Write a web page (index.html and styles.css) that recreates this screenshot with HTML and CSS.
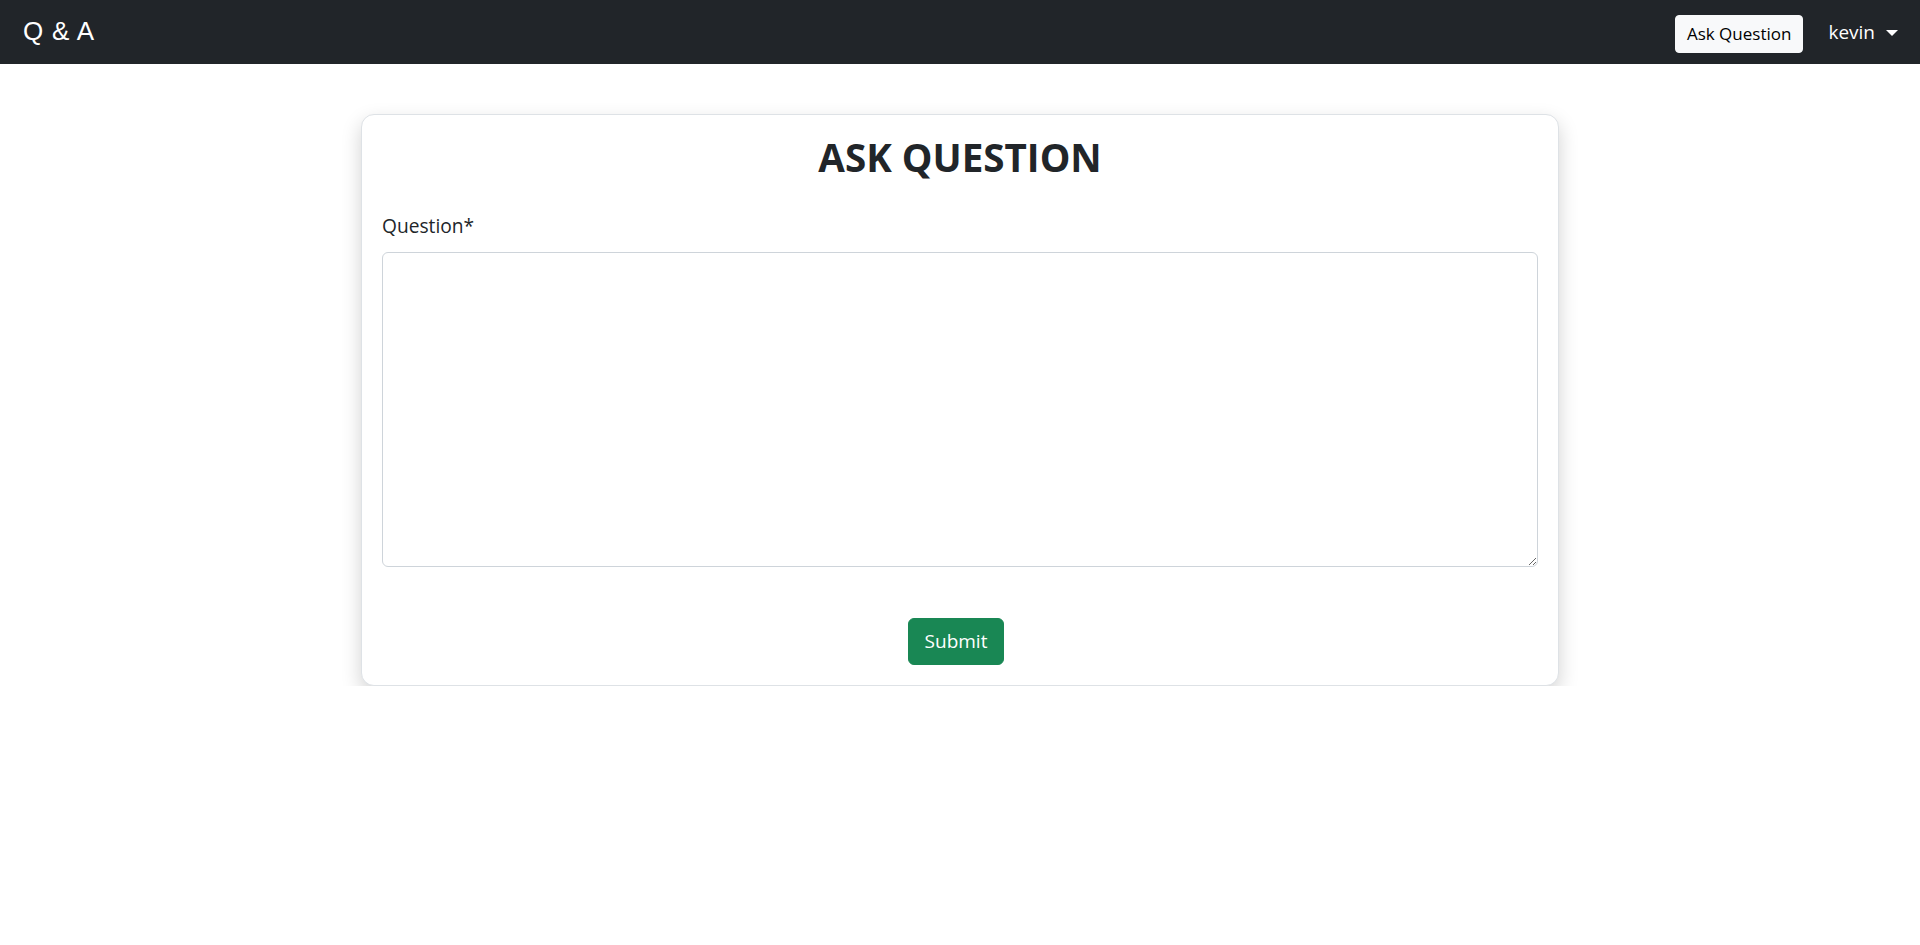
FILE: index.html
```html
<!DOCTYPE html>
<html lang="en">
<head>
<meta charset="utf-8">
<title>Q &amp; A - Ask Question</title>
<link rel="stylesheet" href="styles.css">
</head>
<body>
<nav class="navbar">
  <a class="brand" href="#">Q &amp; A</a>
  <div class="nav-right">
    <a class="btn-light" href="#">Ask Question</a>
    <a class="user" href="#">kevin<span class="caret"></span></a>
  </div>
</nav>
<main class="page">
  <form class="card">
    <h1 class="title">ASK QUESTION</h1>
    <label class="label" for="q">Question*</label>
    <textarea id="q" class="textarea"></textarea>
    <div class="actions">
      <button type="button" class="btn-submit">Submit</button>
    </div>
  </form>
</main>
</body>
</html>
```

FILE: styles.css
```css
* { box-sizing: border-box; }
html, body { margin: 0; padding: 0; }
body {
  font-family: "Open Sans", "Noto Sans", sans-serif;
  color: #212529;
  background: #fff;
}
a { text-decoration: none; }

.navbar {
  height: 64px;
  background: #212529;
  display: flex;
  align-items: center;
  justify-content: space-between;
  padding: 0 22px 0 23px;
}
.brand {
  font-family: "Liberation Sans", Arial, sans-serif;
  font-size: 26px;
  color: #fff;
  letter-spacing: 0.8px;
  line-height: 1;
  margin-top: -2px;
}
.nav-right {
  display: flex;
  align-items: center;
  gap: 25px;
  margin-top: 4px;
}
.btn-light {
  display: inline-block;
  background: #f8f9fa;
  color: #000;
  border: 1px solid #f8f9fa;
  border-radius: 4px;
  font-size: 17px;
  line-height: 24px;
  padding: 6px 11px;
}
.user {
  color: #fff;
  font-size: 19px;
  line-height: 24px;
  display: flex;
  align-items: center;
  margin-top: -4px;
}
.caret {
  display: inline-block;
  width: 0;
  height: 0;
  margin-left: 11px;
  margin-top: 2px;
  border-top: 6px solid #fff;
  border-left: 6px solid transparent;
  border-right: 6px solid transparent;
}

.page {
  padding-top: 50px;
}
.card {
  width: 1198px;
  margin: 0 auto;
  border: 1px solid #dee2e6;
  border-radius: 13px;
  background: #fff;
  box-shadow: 0 8px 20px rgba(0, 0, 0, 0.18);
  padding: 20px;
  display: flex;
  flex-direction: column;
}
.title {
  margin: 0 0 32px;
  text-align: center;
  font-size: 38.6px;
  font-weight: 700;
  line-height: 45px;
}
.label {
  font-size: 19.2px;
  line-height: 28.8px;
  margin-bottom: 11px;
}
.textarea {
  width: 100%;
  height: 315px;
  border: 1px solid #ced4da;
  border-radius: 6px;
  padding: 6px 12px;
  font-family: inherit;
  font-size: 16px;
  resize: vertical;
  outline: none;
}
.actions {
  display: flex;
  justify-content: center;
  margin-top: 51px;
  padding-right: 8px;
}
.btn-submit {
  background: #198754;
  color: #fff;
  border: 1px solid #198754;
  border-radius: 6px;
  font-family: inherit;
  font-size: 19px;
  line-height: 30px;
  padding: 7px 16px 8px;
  cursor: pointer;
}
```
